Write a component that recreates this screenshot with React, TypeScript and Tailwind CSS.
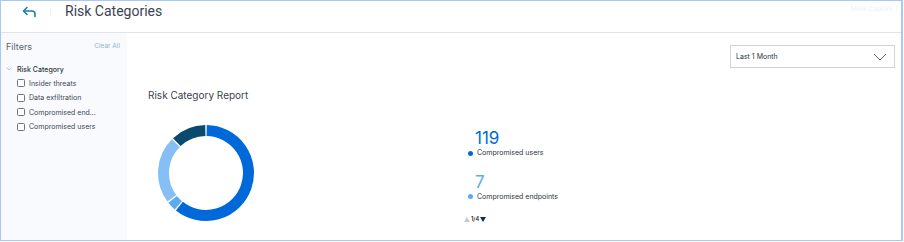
import React from "react";

const data = [
  { value: 119, color: "#0069d9" },
  { value: 7, color: "#5aacf2" },
  { value: 45, color: "#86bff5" },
  { value: 24, color: "#0b4a6f" },
];

function Donut() {
  const total = data.reduce((s, d) => s + d.value, 0);
  const cx = 49, cy = 49, r = 42.5, w = 11;
  let acc = 0;
  const gap = 0.9; // degrees
  const paths = data.map((d, i) => {
    const a0 = (acc / total) * 360 + gap;
    acc += d.value;
    const a1 = (acc / total) * 360 - gap;
    const toXY = (a: number) => {
      const rad = ((a - 90) * Math.PI) / 180;
      return [cx + r * Math.cos(rad), cy + r * Math.sin(rad)];
    };
    const [x0, y0] = toXY(a0);
    const [x1, y1] = toXY(a1);
    const large = a1 - a0 > 180 ? 1 : 0;
    return (
      <path
        key={i}
        d={`M ${x0} ${y0} A ${r} ${r} 0 ${large} 1 ${x1} ${y1}`}
        stroke={d.color}
        strokeWidth={w}
        fill="none"
      />
    );
  });
  return (
    <svg width="98" height="98" viewBox="0 0 98 98">
      {paths}
    </svg>
  );
}

function Check({ label }: { label: string }) {
  return (
    <div className="flex items-center gap-[4px] h-[14.5px]">
      <div className="w-[8px] h-[8px] rounded-[1.5px] border border-[#6b7280] bg-white" />
      <span className="text-[7px] text-[#3f4852] leading-none">{label}</span>
    </div>
  );
}

export default function App() {
  return (
    <div
      className="w-[903px] h-[241px] border border-r-2 border-[#a6c9f6] bg-white flex flex-col overflow-hidden"
      style={{ fontFamily: "Inter, 'Noto Sans', sans-serif" }}
    >
      <div className="h-[32px] shrink-0 border-b border-[#dfe4ea] flex items-center relative">
        <svg className="ml-[21px] mt-[-10px]" width="15" height="12" viewBox="0 0 15 12" fill="none">
          <path d="M5 1.5 L1.5 5 L5 8.5" stroke="#1f7ea0" strokeWidth="1.6" strokeLinecap="round" strokeLinejoin="round" />
          <path d="M1.8 5 H10 a3 3 0 0 1 3 3 V10.5" stroke="#1f7ea0" strokeWidth="1.6" strokeLinecap="round" strokeLinejoin="round" />
        </svg>
        <div className="ml-[13px] mt-[-10px] w-px h-[8px] bg-[#eef0f3]" />
        <div
          className="ml-[14px] mt-[-11px] text-[14px] text-[#3b4450] leading-none"
          style={{ fontFamily: "Roboto, 'Noto Sans', sans-serif" }}
        >
          Risk Categories
        </div>
        <div className="absolute right-0 top-[4px] text-[6.5px] text-[#eef1f5] pr-[2px]">More Capture T</div>
      </div>
      <div className="flex flex-1 min-h-0">
        <div className="w-[126px] shrink-0 bg-[#f8fafd] flex flex-col">
          <div className="flex items-center justify-between pl-[5px] pr-[7px] pt-[4px] h-[22px]">
            <span className="text-[9px] text-[#5b6670] leading-none">Filters</span>
            <span className="text-[6.5px] text-[#8fb9c6] leading-none">Clear All</span>
          </div>
          <div className="flex items-center gap-[5px] pl-[5px] mt-[8px] h-[12px]">
            <svg width="6" height="4" viewBox="0 0 6 4" fill="none">
              <path d="M0.5 0.5 L3 3 L5.5 0.5" stroke="#b0b8c1" strokeWidth="0.8" />
            </svg>
            <span className="text-[7px] font-medium text-[#2f3842] leading-none">Risk Category</span>
          </div>
          <div className="pl-[16px] mt-[1px] flex flex-col">
            <Check label="Insider threats" />
            <Check label="Data exfiltration" />
            <Check label="Compromised end..." />
            <Check label="Compromised users" />
          </div>
        </div>
        <div className="flex-1 relative">
          <div className="absolute right-[6px] top-[12px] w-[165px] h-[23px] border border-[#cfd3d8] bg-white flex items-center justify-between pl-[5px] pr-[7px]">
            <span className="text-[7px] text-[#2b333c] leading-none">Last 1 Month</span>
            <svg width="14" height="8" viewBox="0 0 14 8" fill="none">
              <path d="M1 1 L7 7 L13 1" stroke="#5b6470" strokeWidth="1" />
            </svg>
          </div>
          <div className="flex">
            <div className="pl-[21px] pt-[57px] w-[330px]">
              <div className="text-[10px] text-[#3b4450] leading-none">Risk Category Report</div>
              <div className="ml-[9px] mt-[24px]">
                <Donut />
              </div>
            </div>
            <div className="pt-[97px] pl-[11px]">
              <div className="pl-[7px] text-[17px] text-[#0069d9] leading-none">119</div>
              <div className="flex items-center gap-[4px] mt-[1px]">
                <span className="w-[5px] h-[5px] rounded-full bg-[#0069d9]" />
                <span className="text-[7px] text-[#2b333c]">Compromised users</span>
              </div>
              <div className="pl-[7px] mt-[15px] text-[17px] text-[#5aacf2] leading-none">7</div>
              <div className="flex items-center gap-[4px] mt-[1px]">
                <span className="w-[5px] h-[5px] rounded-full bg-[#5aacf2]" />
                <span className="text-[7px] text-[#2b333c]">Compromised endpoints</span>
              </div>
              <div className="flex items-center mt-[15px] ml-[-4px] gap-[1px]">
                <svg width="6" height="5" viewBox="0 0 6 5"><path d="M3 0 L6 5 L0 5 Z" fill="#c5c9ce" /></svg>
                <span className="text-[5.5px] font-semibold text-[#1b2330] leading-none">1/4</span>
                <svg width="6" height="5" viewBox="0 0 6 5"><path d="M0 0 L6 0 L3 5 Z" fill="#0b2a6f" /></svg>
              </div>
            </div>
          </div>
        </div>
      </div>
    </div>
  );
}
